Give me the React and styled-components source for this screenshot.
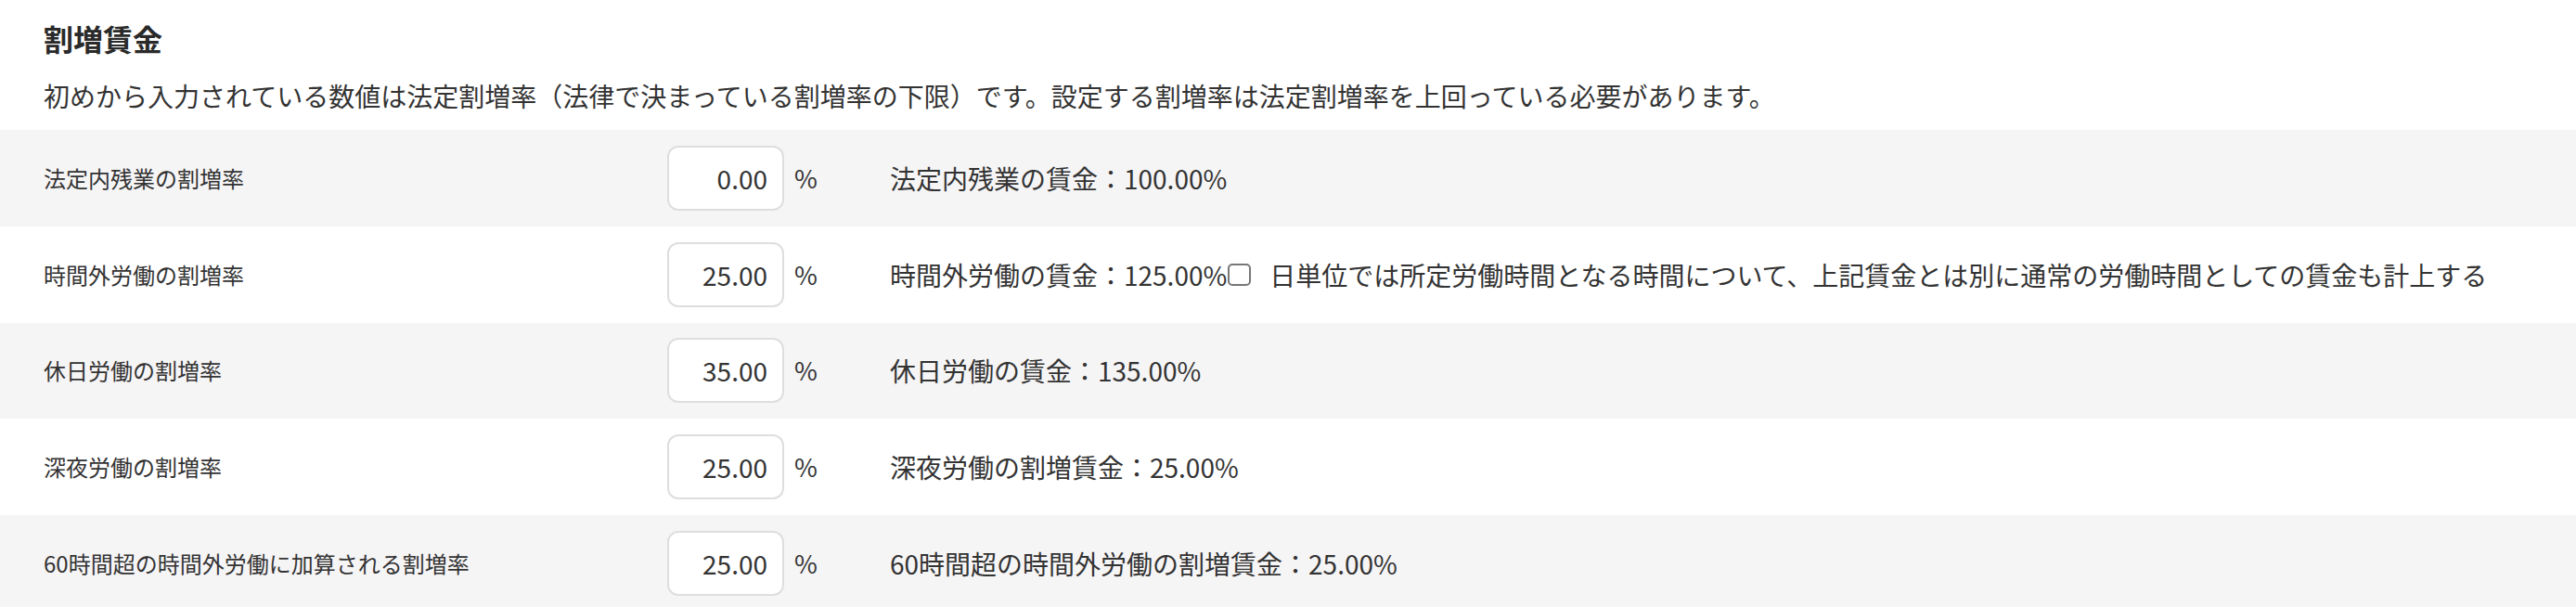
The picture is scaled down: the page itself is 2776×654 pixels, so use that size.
import React from "react";
import styled, { createGlobalStyle } from "styled-components";

const GlobalStyle = createGlobalStyle`
  html, body {
    margin: 0;
    padding: 0;
    background: #ffffff;
  }
  body {
    font-family: "Noto Sans CJK JP", "Noto Sans", sans-serif;
    color: #333333;
  }
`;

const Page = styled.section`
  width: 100%;
  padding-top: 17px;
`;

const Title = styled.h3`
  margin: 0;
  padding-left: 47px;
  font-size: 32px;
  line-height: 48px;
  font-weight: 700;
  color: #2a2a2a;
`;

const Description = styled.p`
  margin: 17px 0 16px;
  padding-left: 47px;
  font-size: 28px;
  line-height: 42px;
  color: #333333;
`;

const Table = styled.div`
  display: flex;
  flex-direction: column;
`;

const Row = styled.div`
  display: grid;
  grid-template-columns: 672px 126px 114px 1fr;
  align-items: center;
  height: 103.75px;
  padding-left: 47px;
  background: ${(p) => (p.$shaded ? "#f6f5f6" : "#ffffff")};
`;

const Label = styled.div`
  font-size: 24px;
  line-height: 36px;
  color: #333333;
`;

const RateInput = styled.input`
  box-sizing: border-box;
  width: 126px;
  height: 70px;
  border: 2px solid #dedede;
  border-radius: 12px;
  background: #ffffff;
  padding: 0 16px 0 8px;
  text-align: right;
  font-family: "Noto Sans CJK JP", "Noto Sans", sans-serif;
  font-size: 28px;
  color: #333333;
  outline: none;
`;

const Unit = styled.span`
  padding-left: 11px;
  font-size: 27px;
  line-height: 40px;
  color: #333333;
`;

const Result = styled.div`
  display: flex;
  align-items: center;
  font-size: 28px;
  line-height: 42px;
  color: #333333;
  white-space: nowrap;
`;

const Check = styled.input`
  appearance: none;
  -webkit-appearance: none;
  box-sizing: border-box;
  width: 25px;
  height: 24px;
  margin: 0 20px 0 1px;
  border: 2px solid #777777;
  border-radius: 5px;
  background: #ffffff;
`;

const rows = [
  { label: "法定内残業の割増率", value: "0.00", result: "法定内残業の賃金：100.00%" },
  {
    label: "時間外労働の割増率",
    value: "25.00",
    result: "時間外労働の賃金：125.00%",
    extra: "日単位では所定労働時間となる時間について、上記賃金とは別に通常の労働時間としての賃金も計上する",
  },
  { label: "休日労働の割増率", value: "35.00", result: "休日労働の賃金：135.00%" },
  { label: "深夜労働の割増率", value: "25.00", result: "深夜労働の割増賃金：25.00%" },
  {
    label: "60時間超の時間外労働に加算される割増率",
    value: "25.00",
    result: "60時間超の時間外労働の割増賃金：25.00%",
  },
];

export default function App() {
  return (
    <>
      <GlobalStyle />
      <Page>
        <Title>割増賃金</Title>
        <Description>
          初めから入力されている数値は法定割増率（法律で決まっている割増率の下限）です。設定する割増率は法定割増率を上回っている必要があります。
        </Description>
        <Table>
          {rows.map((r, i) => (
            <Row key={r.label} $shaded={i % 2 === 0}>
              <Label>{r.label}</Label>
              <RateInput type="text" defaultValue={r.value} />
              <Unit>%</Unit>
              <Result>
                <span>{r.result}</span>
                {r.extra && (
                  <>
                    <Check type="checkbox" />
                    <span>{r.extra}</span>
                  </>
                )}
              </Result>
            </Row>
          ))}
        </Table>
      </Page>
    </>
  );
}
